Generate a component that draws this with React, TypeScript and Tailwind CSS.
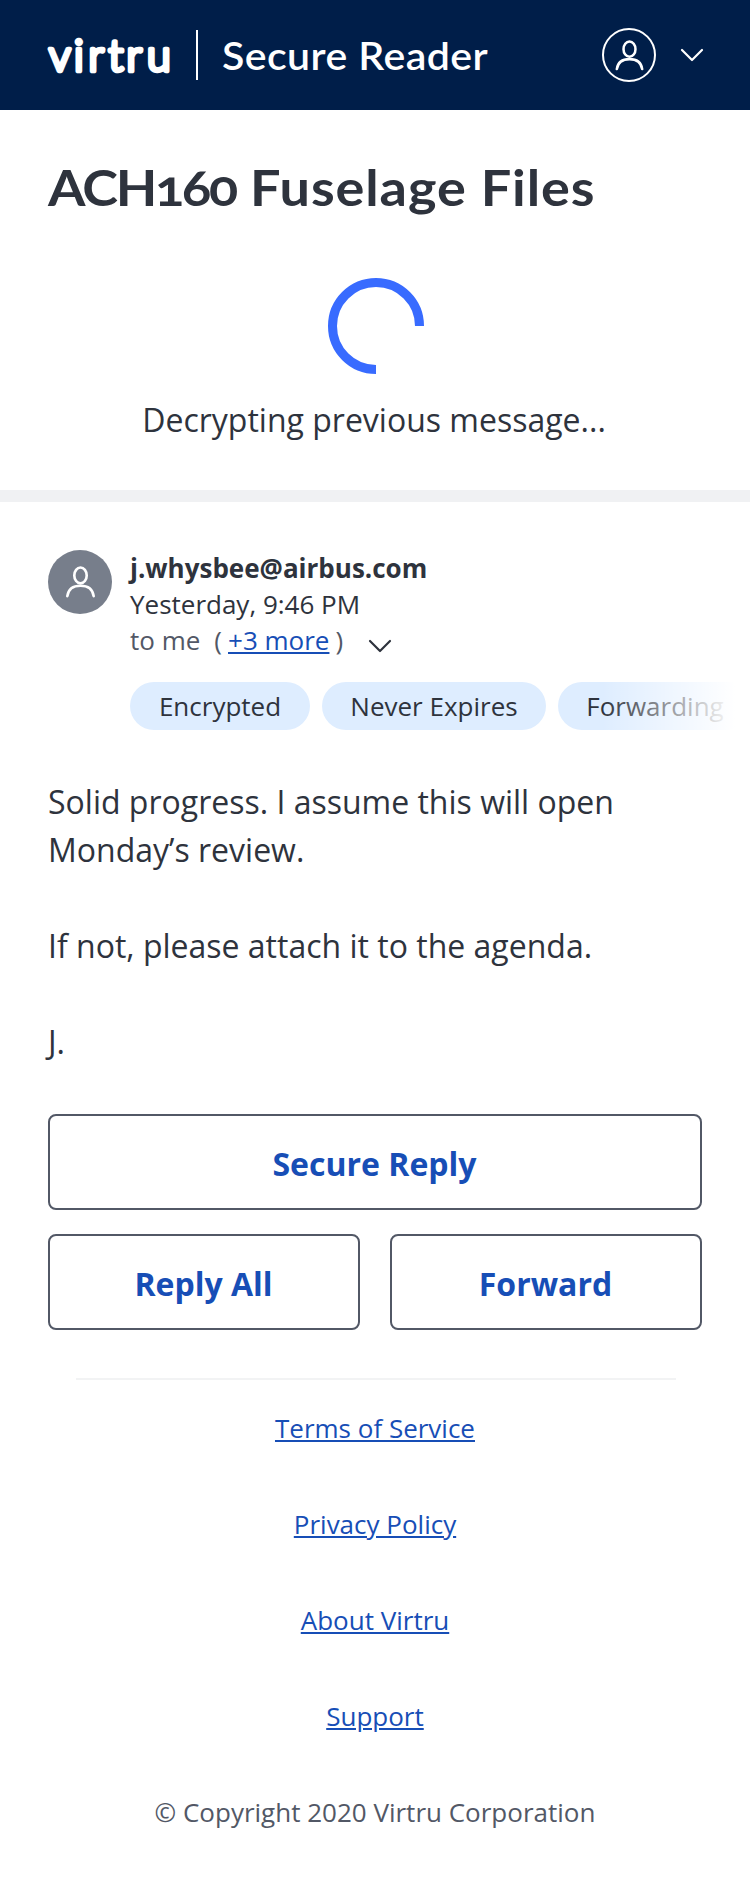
import React from "react";

const links = ["Terms of Service", "Privacy Policy", "About Virtru", "Support"];

function Person({ className }: { className: string }) {
  return (
    <svg viewBox="0 0 32 34" className={className} fill="none" stroke="currentColor" strokeWidth="2.8" strokeLinecap="round">
      <ellipse cx="16" cy="10" rx="6.6" ry="8.4" />
      <path d="M2 32C3 25 8.2 21 16 21S29 25 30 32" />
    </svg>
  );
}

function Chevron() {
  return (
    <svg viewBox="0 0 24 14" className="h-3.5 w-6" fill="none" stroke="currentColor" strokeWidth="2.2" strokeLinecap="round" strokeLinejoin="round">
      <path d="M2 2L12 12L22 2" />
    </svg>
  );
}

function Logo() {
  return (
    <svg viewBox="0 0 130 60" className="h-[60px] w-[130px] overflow-visible" role="img" aria-label="virtru">
      <text
        x="5 30 44.5 64.5 82.5 103"
        y="46"
        fontSize="43"
        fill="white"
        stroke="white"
        strokeWidth="4.6"
        strokeLinejoin="round"
        className="font-['Lato',sans-serif] font-light"
      >
        virtru
      </text>
    </svg>
  );
}

function Chip({ width, children }: { width: string; children: React.ReactNode }) {
  return (
    <span className={`h-12 shrink-0 rounded-full bg-[#deedff] text-center leading-[48px] whitespace-nowrap ${width}`}>
      {children}
    </span>
  );
}

function Action({ children }: { children: React.ReactNode }) {
  return (
    <button className="h-24 w-full rounded-lg border-2 border-[#525866] pt-1 pr-px text-[32px] font-bold text-[#174eb6]">
      {children}
    </button>
  );
}

export default function App() {
  return (
    <div className="min-h-[1878px] w-[750px] overflow-hidden bg-white font-['Open_Sans',sans-serif] text-[26px] leading-9 text-[#2e333d]">
      <header className="flex h-[110px] items-center bg-[#001e49] pr-[46px] pl-11 text-white">
        <Logo />
        <div className="ml-[22px] h-[50px] w-0.5 bg-white" />
        <div className="ml-6 origin-left scale-x-[1.08] font-['Lato',sans-serif] text-[38px] leading-[50px] font-semibold tracking-[0.4px]">
          Secure Reader
        </div>
        <div className="ml-auto flex h-[54px] w-[54px] items-center justify-center rounded-full border-2 border-white">
          <Person className="h-[31px] w-[29px]" />
        </div>
        <div className="ml-6">
          <Chevron />
        </div>
      </header>

      <section className="flex flex-col pt-12">
        <h1 className="ml-12 origin-left scale-x-[1.08] font-['Lato',sans-serif] text-[50px] leading-[58px] font-bold tracking-[0.85px] whitespace-nowrap oldstyle-nums">
          <span className="tracking-[-2.05px]">ACH160</span> Fuselage Files
        </h1>
        <svg viewBox="0 0 96 96" className="mt-[62px] ml-[328px] size-24" fill="none" stroke="#386bff" strokeWidth="9">
          <path d="M91.5 48A43.5 43.5 0 1 0 48 91.5" />
        </svg>
        <p className="mt-[22px] pr-[2px] text-center text-[32px] leading-[48px]">Decrypting previous message...</p>
      </section>

      <div className="mt-[46px] h-3 bg-[#f0f1f3]" />

      <main className="px-12 pt-12">
        <div className="flex gap-[18px]">
          <div className="flex size-16 shrink-0 items-center justify-center rounded-full bg-[#777e8b] text-white">
            <Person className="h-8 w-[31px]" />
          </div>
          <div className="min-w-0">
            <div className="font-bold">j.whysbee@airbus.com</div>
            <div>Yesterday, 9:46 PM</div>
            <div className="flex text-[#525866]">
              <span>to me</span>
              <span className="ml-[14px]">(</span>
              <a className="ml-[6px] text-[#174eb6] underline">+3 more</a>
              <span className="ml-[6px]">)</span>
              <span className="mt-[17px] ml-[25px] text-[#2e333d]">
                <Chevron />
              </span>
            </div>
            <div className="relative mt-6 flex w-[620px] gap-3">
              <Chip width="w-[180px]">Encrypted</Chip>
              <Chip width="w-[224px]">Never Expires</Chip>
              <Chip width="w-[194px]">Forwarding</Chip>
              <div className="absolute inset-y-0 right-0 w-[148px] bg-linear-to-r from-white/0 to-white to-90%" />
            </div>
          </div>
        </div>

        <div className="mt-12 text-[32px] leading-[48px]">
          <p>
            Solid progress. I assume this will open
            <br />
            Monday’s review.
          </p>
          <p className="mt-12">If not, please attach it to the agenda.</p>
          <p className="mt-12">J.</p>
        </div>

        <div className="mt-12 grid grid-cols-2 gap-x-[30px] gap-y-6">
          <div className="col-span-2">
            <Action>Secure Reply</Action>
          </div>
          <Action>Reply All</Action>
          <Action>Forward</Action>
        </div>
      </main>

      <footer className="mt-12 flex flex-col items-center">
        <div className="ml-0.5 h-0.5 w-[600px] bg-[#f2f3f4]" />
        <nav className="mt-[30px] flex flex-col items-center gap-[60px]">
          {links.map((l) => (
            <a key={l} className="text-[#174eb6] underline">
              {l}
            </a>
          ))}
          <p className="text-[#525866]">© Copyright 2020 Virtru Corporation</p>
        </nav>
      </footer>
    </div>
  );
}
